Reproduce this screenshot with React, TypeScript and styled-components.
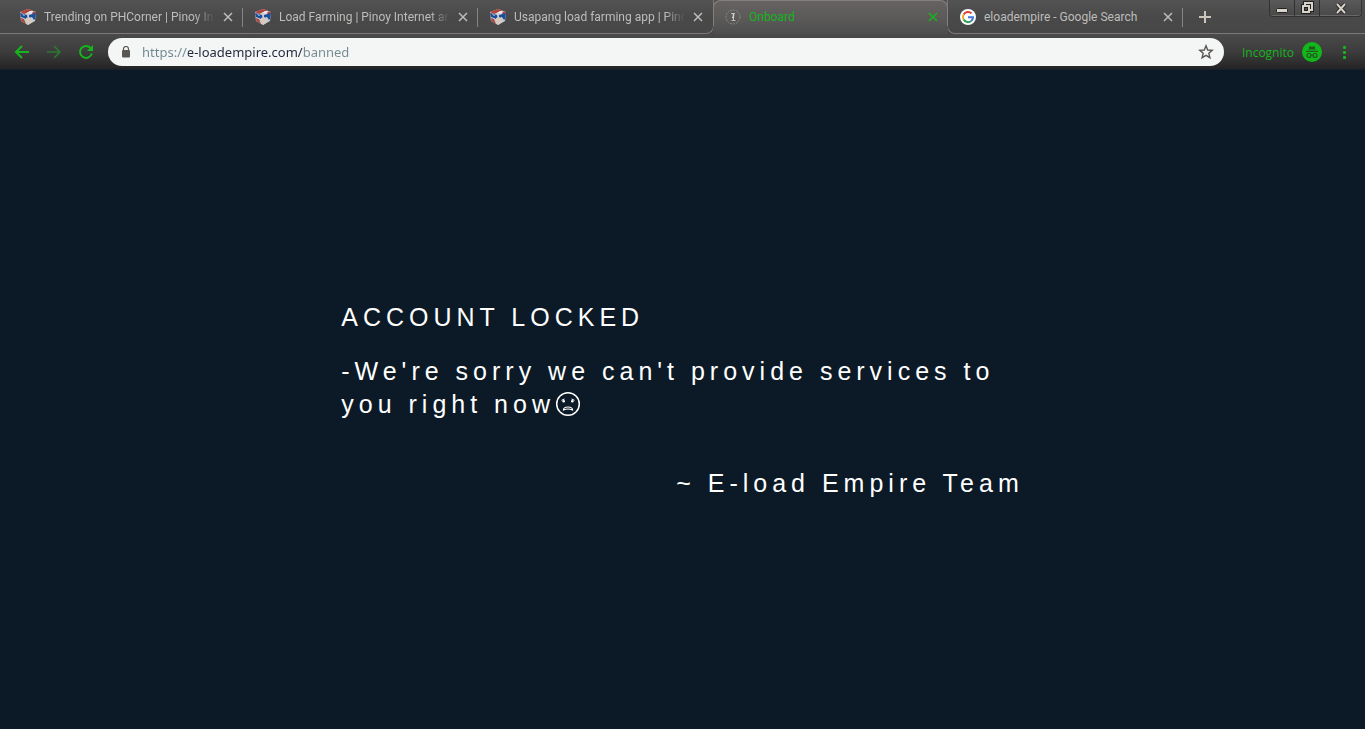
import React from "react";
import styled, { createGlobalStyle } from "styled-components";

const GREEN = "#16b51c";
const EDGE = "#7d7976";

const GlobalStyle = createGlobalStyle`
  *, *::before, *::after { box-sizing: border-box; }
  html, body, #root { height: 100%; }
  body {
    margin: 0;
    background: #0b1a26;
    font-family: "Open Sans", "Noto Sans", sans-serif;
    font-size: 12px;
  }
  button { padding: 0; border: 0; background: none; color: inherit; font: inherit; }
  svg { display: block; flex: none; }
`;

const Browser = styled.div`
  display: flex;
  flex-direction: column;
  min-height: 100%;
`;

const TabStrip = styled.header`
  display: flex;
  align-items: stretch;
  height: 34px;
  background: linear-gradient(#535353, #494949 50%, #474747);
`;

const TabGroup = styled.div<{ $side: "left" | "right" }>`
  display: flex;
  flex: ${(p) => (p.$side === "left" ? "0 1 714px" : "1 1 0")};
  min-width: 0;
  padding-left: ${(p) => (p.$side === "left" ? "8px" : "0")};
  border-bottom: 1px solid ${EDGE};
  ${(p) =>
    p.$side === "left"
      ? `border-right: 1px solid ${EDGE}; border-bottom-right-radius: 8px;`
      : `border-left: 1px solid ${EDGE}; border-bottom-left-radius: 8px;`}
`;

const TabBox = styled.div<{ $active?: boolean; $divider?: boolean }>`
  position: relative;
  display: flex;
  align-items: center;
  flex: 0 1 235px;
  min-width: 0;
  height: ${(p) => (p.$active ? "34px" : "33px")};
  padding: 0 10px 0 12px;
  gap: 8px;
  color: ${(p) => (p.$active ? GREEN : "#bdbdbb")};
  ${(p) =>
    p.$active &&
    `
    margin: 0 -1px;
    padding-bottom: 1px;
    background: linear-gradient(#666362, #5c5b5a 50%, #4d4d4d);
    border-radius: 8px 8px 0 0;
    z-index: 1;
    &::before {
      content: "";
      position: absolute;
      inset: 0 0 8px;
      border: 1px solid #85807e;
      border-bottom: 0;
      border-radius: 8px 8px 0 0;
      pointer-events: none;
    }
  `}
  ${(p) =>
    p.$divider &&
    `
    &::after {
      content: "";
      position: absolute;
      right: 0;
      top: 8px;
      height: 19px;
      border-right: 1px solid #858585;
    }
  `}
`;

const TabTitle = styled.button<{ $fade?: boolean }>`
  flex: 1;
  min-width: 0;
  overflow: hidden;
  white-space: nowrap;
  text-align: left;
  font-family: Roboto, "Open Sans", sans-serif;
  line-height: 18px;
  ${(p) => p.$fade && "mask-image: linear-gradient(to left, transparent, #000 20px);"}
`;

const IconButton = styled.button<{ $w?: number; $color?: string }>`
  display: flex;
  align-items: center;
  justify-content: center;
  flex: none;
  width: ${(p) => p.$w ?? 10}px;
  color: ${(p) => p.$color ?? "inherit"};
`;

const WindowControls = styled.div`
  display: flex;
  height: 17px;
  margin: 0 3px 0 auto;
  border: 1px solid #333;
  border-top: 0;
  border-radius: 0 0 4px 4px;
  background: linear-gradient(#5a5a5a, #484848);
  box-shadow: inset 0 -1px #686868;
  & > button + button { border-left: 1px solid #303030; }
`;

const Toolbar = styled.div`
  display: flex;
  align-items: center;
  height: 36px;
  padding: 0 13px 0 14px;
  background: linear-gradient(#4a4a4a, #3c3c3c 50%, #262626 94%, #16202a);
  color: ${GREEN};
`;

const NavButtons = styled.nav`
  display: flex;
  gap: 16px;
  margin-right: 14px;
`;

const AddressBar = styled.label`
  display: flex;
  align-items: center;
  flex: 1;
  height: 28px;
  padding: 0 10px 0 13px;
  border-radius: 14px;
  background: #f4f6f6;
  color: #5a5753;
`;

const AddressInput = styled.input`
  flex: 1;
  min-width: 0;
  margin-left: 11px;
  padding: 0;
  border: 0;
  outline: 0;
  font: 13px/20px "Noto Sans", "Open Sans", sans-serif;
  color: transparent;
  caret-color: #222;
  background: linear-gradient(to right, #6f8790 46px, #22263a 46px, #22263a 161px, #768a90 161px);
  background-clip: text;
  -webkit-background-clip: text;
`;

const Profile = styled.button`
  display: flex;
  align-items: center;
  gap: 8px;
  margin: 0 14px 0 18px;
  color: ${GREEN};
`;

const Page = styled.main`
  display: flex;
  flex: 1;
  align-items: center;
  justify-content: center;
  padding-top: 2px;
  color: #fff;
  font: 25px/33px "Liberation Sans", Arial, sans-serif;
  letter-spacing: 5px;
`;

const Notice = styled.section`
  width: 50%;
`;

const Heading = styled.h1`
  margin: 0 0 21px;
  font: inherit;
`;

const Message = styled.p`
  margin: 0 0 46px;
  svg { display: inline-block; vertical-align: -4px; }
`;

const Signature = styled.p`
  margin: 0;
  text-align: right;
`;

const Cube = () => (
  <svg width="16" height="16" viewBox="0 0 16 16" aria-hidden="true">
    <path d="M8 0 16 3 15 12 8 16 1 12 0 3z" fill="#c9cdd2" />
    <path d="M8 0 12 1.5 4 5 0 3z" fill="#b3423a" />
    <path d="M10 2 14 2.6 11 4.8 7 4z" fill="#e9e9e9" />
    <path d="M13 2.5 16 3 15.7 5 12 5z" fill="#ad4740" />
    <path d="M0 4 7 6 8 11 4 9 1 8z" fill="#1b4c97" />
    <path d="M16 4 9 6 9 9 12 8 14 11 15 10z" fill="#1d4e9c" />
    <path d="M1 9 4 10 6 15 1.3 12z" fill="#a94840" />
    <path d="M6 9 9 8 12 10 11 14 8 16 6 13z" fill="#d5cabd" />
    <path d="M2 5 5 6 4 7z" fill="#dde6f2" />
  </svg>
);

const Favicon = () => (
  <svg width="16" height="16" viewBox="0 0 16 16" fill="none" aria-hidden="true">
    <circle cx="8" cy="8" r="7" stroke="#8a8784" strokeDasharray="2 1" />
    <path d="M6 4.5h4M6.5 11.5h4M8.5 7v4" stroke="#bdbab4" />
    <path d="M8.5 5v2.500M7 8.500h2" stroke="#d6d4cf" strokeWidth="1.5" />
  </svg>
);

const GoogleIcon = () => (
  <svg width="16" height="16" viewBox="0 0 16 16" fill="none" aria-hidden="true">
    <circle cx="8" cy="8" r="8" fill="#fff" />
    <g strokeWidth="2">
      <path d="M3.600 5.400A5.100 5.100 0 0 1 11.600 4.400" stroke="#d8402f" />
      <path d="M3.600 5.400A5.100 5.100 0 0 0 3.600 10.600" stroke="#e8ae20" />
      <path d="M3.600 10.600A5.100 5.100 0 0 0 11.200 12" stroke="#2f9d50" />
      <path d="M11.200 12A5.100 5.100 0 0 0 13 8.200H8" stroke="#3e78d8" />
    </g>
  </svg>
);

const Cross = () => (
  <svg width="10" height="10" viewBox="0 0 10 10" stroke="currentColor" strokeWidth="1.5" aria-hidden="true">
    <path d="M1 1 9 9M9 1 1 9" />
  </svg>
);

const Arrow = ({ forward = false }: { forward?: boolean }) => (
  <svg width="16" height="16" viewBox="0 0 16 16" fill="none" stroke="currentColor" strokeWidth={forward ? 1.5 : 2} aria-hidden="true">
    {forward ? <path d="M1 8H14M8 2 14 8 8 14" /> : <path d="M15 8H2M8 2 2 8 8 14" />}
  </svg>
);

const Reload = () => (
  <svg width="16" height="16" viewBox="0 0 16 16" fill="none" aria-hidden="true">
    <path d="M12.6 4A6 6 0 1 0 13.8 9.5" stroke="currentColor" strokeWidth="2" />
    <path d="M15 1v6H9z" fill="currentColor" />
  </svg>
);

const Lock = () => (
  <svg width="10" height="12" viewBox="0 0 10 12" aria-hidden="true">
    <path d="M2.5 5V3a2.5 2.5 0 0 1 5 0v2" fill="none" stroke="currentColor" strokeWidth="1.2" />
    <rect x="1" y="4" width="8" height="7.5" rx="1" fill="currentColor" />
  </svg>
);

const Star = () => (
  <svg width="16" height="16" viewBox="0 0 16 16" fill="none" stroke="currentColor" strokeWidth="1.4" aria-hidden="true">
    <path d="M8 1.8 9.7 6 14.2 6.3 10.8 9.2 11.9 13.7 8 11.3 4.1 13.7 5.2 9.2 1.8 6.3 6.3 6z" />
  </svg>
);

const Spy = () => (
  <svg width="20" height="20" viewBox="0 0 20 20" aria-hidden="true">
    <circle cx="10" cy="10" r="10" fill="#12b818" />
    <path d="M6.6 7.6 7.4 4.2 10 4.8 12.6 4.2 13.4 7.6z" fill="#245527" />
    <path d="M4 9.3H16" stroke="#245527" strokeWidth="1.2" />
    <g fill="none" stroke="#245527" strokeWidth="1.2">
      <circle cx="7" cy="13.5" r="2" />
      <circle cx="13" cy="13.5" r="2" />
      <path d="M9 13.2Q10 12.6 11 13.2" />
    </g>
  </svg>
);

const Dots = () => (
  <svg width="4" height="14" viewBox="0 0 4 14" fill="currentColor" aria-hidden="true">
    <rect x="1" y="1" width="3" height="3" rx="1" />
    <rect x="1" y="6" width="3" height="3" rx="1" />
    <rect x="1" y="11" width="3" height="3" rx="1" />
  </svg>
);

const WorriedFace = () => (
  <svg width="26" height="26" viewBox="0 0 26 26" fill="none" stroke="#fff" strokeWidth="1.5" role="img" aria-label="worried face">
    <circle cx="13" cy="13" r="11.3" />
    <path d="M6.5 9.3 9.5 8M16.5 8 19.5 9.3" strokeWidth="1" />
    <circle cx="8.700" cy="10.300" r="1.3" fill="#fff" stroke="none" />
    <circle cx="17.300" cy="10.300" r="1.3" fill="#fff" stroke="none" />
    <path d="M8.500 19C8.500 15 17.500 15 17.500 19 15 17.900 11 17.900 8.500 19z" strokeWidth="1.200" />
  </svg>
);

type TabProps = {
  icon: React.ReactNode;
  title: string;
  active?: boolean;
  divider?: boolean;
  fade?: boolean;
};

const Tab = ({ icon, title, active, divider, fade }: TabProps) => (
  <TabBox $active={active} $divider={divider}>
    {icon}
    <TabTitle $fade={fade}>{title}</TabTitle>
    <IconButton aria-label={`Close ${title}`}>
      <Cross />
    </IconButton>
  </TabBox>
);

export default function App() {
  return (
    <>
      <GlobalStyle />
      <Browser>
        <TabStrip>
          <TabGroup $side="left">
            <Tab icon={<Cube />} title="Trending on PHCorner | Pinoy In" divider fade />
            <Tab icon={<Cube />} title="Load Farming | Pinoy Internet an" divider fade />
            <Tab icon={<Cube />} title="Usapang load farming app | Pino" fade />
          </TabGroup>
          <Tab icon={<Favicon />} title="Onboard" active />
          <TabGroup $side="right">
            <Tab icon={<GoogleIcon />} title="eloadempire - Google Search" divider />
            <IconButton $w={44} $color="#cbc6bb" aria-label="New tab">
              <svg width="12" height="12" viewBox="0 0 12 12" stroke="currentColor" strokeWidth="2" aria-hidden="true">
                <path d="M6 0V12M0 6H12" />
              </svg>
            </IconButton>
            <WindowControls>
              <IconButton $w={24} $color="#d8d4ca" aria-label="Minimize">
                <svg width="14" height="14" viewBox="0 0 14 14" aria-hidden="true">
                  <rect x="1.5" y="7.5" width="11" height="4" rx="1" fill="currentColor" stroke="#222" />
                </svg>
              </IconButton>
              <IconButton $w={25} $color="#d8d4ca" aria-label="Restore">
                <svg width="14" height="14" viewBox="0 0 14 14" fill="none" aria-hidden="true">
                  <path d="M5 4V2h7v7h-2M3 5h6v6H3z" stroke="#222" strokeWidth="4" />
                  <path d="M5 4V2h7v7h-2M3 5h6v6H3z" stroke="currentColor" strokeWidth="2" />
                </svg>
              </IconButton>
              <IconButton $w={42} $color="#d8d4ca" aria-label="Close window">
                <svg width="14" height="14" viewBox="0 0 14 14" aria-hidden="true">
                  <path d="M3 3 11 12M11 3 3 12" stroke="#222" strokeWidth="4" />
                  <path d="M3 3 11 12M11 3 3 12" stroke="currentColor" strokeWidth="2" />
                </svg>
              </IconButton>
            </WindowControls>
          </TabGroup>
        </TabStrip>
        <Toolbar>
          <NavButtons aria-label="History">
            <IconButton $w={16} aria-label="Back"><Arrow /></IconButton>
            <IconButton $w={16} $color="#2c7a2e" aria-label="Forward"><Arrow forward /></IconButton>
            <IconButton $w={16} aria-label="Reload"><Reload /></IconButton>
          </NavButtons>
          <AddressBar>
            <Lock />
            <AddressInput aria-label="Address" defaultValue="https://e-loadempire.com/banned" spellCheck={false} />
            <IconButton $w={16} aria-label="Bookmark this page"><Star /></IconButton>
          </AddressBar>
          <Profile>
            Incognito
            <Spy />
          </Profile>
          <IconButton $w={16} aria-label="Menu"><Dots /></IconButton>
        </Toolbar>
        <Page>
          <Notice>
            <Heading>ACCOUNT LOCKED</Heading>
            <Message>
              -We're sorry we can't provide services to you right now
              <WorriedFace />
            </Message>
            <Signature>~ E-load Empire Team</Signature>
          </Notice>
        </Page>
      </Browser>
    </>
  );
}
